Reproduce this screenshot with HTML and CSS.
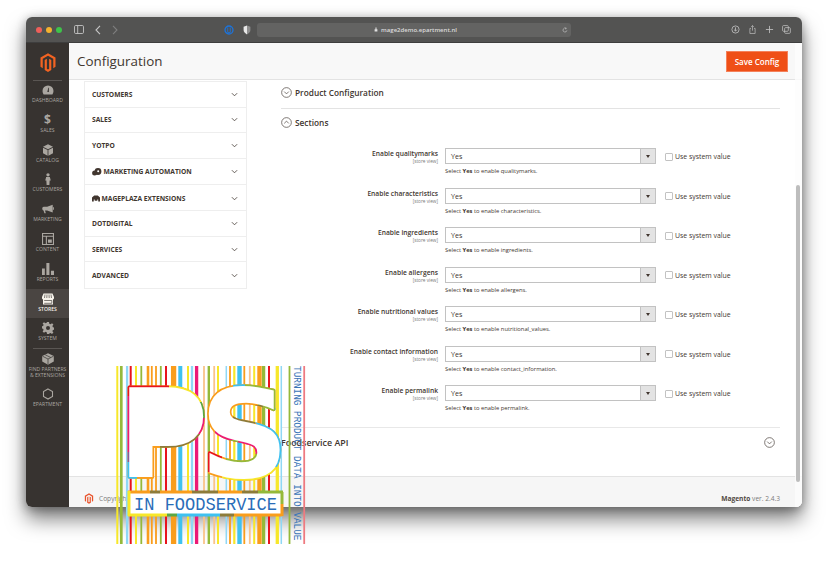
FILE: index.html
```html
<!DOCTYPE html>
<html lang="en">
<head>
<meta charset="utf-8">
<title>Configuration</title>
<link rel="stylesheet" href="styles.css">
</head>
<body>
<div class="stage">
  <div class="window">
    <header class="titlebar">
      <div class="lights"><i class="light red"></i><i class="light amber"></i><i class="light green"></i></div>
      <svg class="tb-icon sidebar-toggle" viewBox="0 0 10 9"><rect x=".5" y=".5" width="9" height="8" rx="1.2"/><path d="M3.7.5v8"/></svg>
      <svg class="tb-icon back" viewBox="0 0 6 10"><path d="M5 .8 1 5l4 4.2"/></svg>
      <svg class="tb-icon forward" viewBox="0 0 6 10"><path d="M1 .8 5 5 1 9.2"/></svg>
      <svg class="ext-blue" viewBox="0 0 10 10"><circle cx="5" cy="5" r="4"/><path class="ext-in" d="M3.700 2.500v5M6.300 2.500v5M3.700 7.500h2.600"/></svg>
      <svg class="ext-shield" viewBox="0 0 8 10"><path class="sh-a" d="M4 .6 7.4 1.8V5c0 2-1.5 3.500-3.400 4.400Z"/><path class="sh-b" d="M4 .6.6 1.800V5c0 2 1.500 3.500 3.400 4.400Z"/></svg>
      <div class="urlbar">
        <span class="url-center"><svg class="lock" viewBox="0 0 6 7"><path d="M1.500 3V2a1.500 1.500 0 0 1 3 0v1h.6v3.600H.9V3Zm.7 0h1.600V2a.8.800 0 0 0-1.600 0Z"/></svg><span class="url">mage2demo.epartment.nl</span></span>
        <svg class="tb-icon reload" viewBox="0 0 8 8"><path d="M6.500 4.500A2.600 2.600 0 1 1 5.500 2M5 .6l.7 1.500-1.500.6"/></svg>
      </div>
      <div class="tb-actions">
        <svg class="tb-icon" viewBox="0 0 10 10"><circle cx="5" cy="5" r="4"/><path d="M5 2.600v4M3.400 5.200 5 6.800l1.600-1.600"/></svg>
        <svg class="tb-icon" viewBox="0 0 10 12"><path d="M3 4.500H1.500v6.800h7V4.500H7M5 7.500V.8M3.200 2.500 5 .8l1.800 1.700"/></svg>
        <svg class="tb-icon" viewBox="0 0 10 10"><path d="M5 1v8M1 5h8"/></svg>
        <svg class="tb-icon" viewBox="0 0 11 11"><rect x=".7" y=".7" width="7" height="7" rx="1.200"/><rect x="3.200" y="3.200" width="7" height="7" rx="1.200"/></svg>
      </div>
    </header>
    <div class="app">
      <nav class="sidebar">
        <div class="side-logo">
          <svg viewBox="0 0 24 25"><path d="M12 0 2 5.800V18.200L5 20V7.600L12 3.500 19 7.600V20L22 18.200V5.800Z"/><path d="M13.500 20.800 12 21.700 10.500 20.800V7.600L7.600 9.300V22.500L12 25 16.400 22.500V9.300L13.500 7.600Z"/></svg>
        </div>
        <a class="side-item"><svg viewBox="0 0 12 10"><path d="M6 .5A5.500 5.500 0 0 0 .5 6c0 1.300.4 2.500 1.100 3.500h8.800c.7-1 1.100-2.200 1.100-3.500A5.500 5.500 0 0 0 6 .5Zm.9 6.500H5.300l1-4.200h.6Z"/></svg><span>Dashboard</span></a>
        <a class="side-item"><span class="dollar">$</span><span>Sales</span></a>
        <a class="side-item"><svg viewBox="0 0 11 12"><path d="M5.500.3 10.500 2.800 5.500 5.200.5 2.800ZM.5 3.800l4.600 2.300v5.600L.5 9.300Zm10 0L5.900 6.100v5.600l4.600-2.400Z"/></svg><span>Catalog</span></a>
        <a class="side-item"><svg viewBox="0 0 7 13"><circle cx="3.500" cy="2" r="1.800"/><path d="M1.500 4.200h4L6.500 8H5.300L5 13H2L1.700 8H.5Z"/></svg><span>Customers</span></a>
        <a class="side-item"><svg viewBox="0 0 14 11"><path d="M12.500.5v9L6 7.200H3.500L4.500 10.500H2.800L1.800 7.200C.8 7 .3 6.200.3 5.200S1 3 2 3h4ZM13 3.500h1v3h-1Z"/></svg><span>Marketing</span></a>
        <a class="side-item"><svg viewBox="0 0 11 11"><path fill-rule="evenodd" d="M0 0h11v11H0Zm1 1v1.500h9V1Zm0 2.500V10h2.500V3.500Zm3.500 0V10H10V3.500ZM5.500 6H9v3H5.500Z"/></svg><span>Content</span></a>
        <a class="side-item"><svg viewBox="0 0 11 11"><path d="M0 5h2.600v6H0Zm4-5h2.800v11H4Zm4.200 7H11v4H8.200Z"/></svg><span>Reports</span></a>
        <a class="side-item active"><svg viewBox="0 0 12 11"><path d="M1.500 0h9L12 3.500v1.200a1.300 1.300 0 0 1-1 1.200V11H1V5.900A1.300 1.300 0 0 1 0 4.700V3.500Z"/><path class="cut" d="M3 1 2.500 4.500M5 1l-.2 3.500M7 1l.2 3.500M9 1l.5 3.500M2.200 7h7.600v2.800H2.200"/></svg><span>Stores</span></a>
        <a class="side-item"><svg viewBox="0 0 12 12"><path fill-rule="evenodd" d="M5 0h2l.3 1.700 1.300.5L10 1.200l1.400 1.400-1 1.400.5 1.300 1.700.3v2l-1.700.3-.5 1.300 1 1.400-1.400 1.400-1.400-1-1.300.5L7 12H5l-.3-1.700-1.300-.5-1.400 1L.6 9.400l1-1.400-.5-1.300L-.6 6.400v-2l1.700-.3.5-1.300-1-1.400L2 .2l1.400 1 1.300-.5ZM6 4a2 2 0 1 0 0 4 2 2 0 0 0 0-4Z"/></svg><span>System</span></a>
        <div class="side-sep"></div>
        <a class="side-item tall"><svg viewBox="0 0 12 12"><path d="M6 .2 11.800 3v5.600L6 11.800.2 8.600V3Z"/><path class="cut" d="M.5 3.200 6 6l5.500-2.800M6 6v5.500M3.200 1.800 8.800 4.500"/></svg><span>Find Partners<br>&amp; Extensions</span></a>
        <a class="side-item"><svg class="hex" viewBox="0 0 11 12"><path d="M5.500.9 10 3.500v5L5.500 11.100 1 8.500v-5Z"/></svg><span>Epartment</span></a>
      </nav>
      <main class="main">
        <div class="pagehead">
          <h1>Configuration</h1>
          <button class="save" type="button">Save Config</button>
        </div>
        <div class="content">
          <aside class="nav">
            <div class="nav-row"><span>Customers</span><svg class="chev" viewBox="0 0 8 5"><path d="M1 1l3 3 3-3"/></svg></div>
            <div class="nav-row"><span>Sales</span><svg class="chev" viewBox="0 0 8 5"><path d="M1 1l3 3 3-3"/></svg></div>
            <div class="nav-row"><span>Yotpo</span><svg class="chev" viewBox="0 0 8 5"><path d="M1 1l3 3 3-3"/></svg></div>
            <div class="nav-row big"><span class="with-icon"><svg viewBox="0 0 10 8"><circle cx="6" cy="3.500" r="3.400"/><circle cx="2.600" cy="5" r="2.500"/><circle class="cutfill" cx="6.200" cy="3.300" r="1"/></svg>Marketing Automation</span><svg class="chev" viewBox="0 0 8 5"><path d="M1 1l3 3 3-3"/></svg></div>
            <div class="nav-row big"><span class="with-icon"><svg class="mp" viewBox="0 0 9 7"><path d="M2.500 0h4L9 2.500V7H7V4.500H6V6H3V4.500H2V7H0V2.500Z"/></svg>Mageplaza Extensions</span><svg class="chev" viewBox="0 0 8 5"><path d="M1 1l3 3 3-3"/></svg></div>
            <div class="nav-row"><span>dotdigital</span><svg class="chev" viewBox="0 0 8 5"><path d="M1 1l3 3 3-3"/></svg></div>
            <div class="nav-row"><span>Services</span><svg class="chev" viewBox="0 0 8 5"><path d="M1 1l3 3 3-3"/></svg></div>
            <div class="nav-row"><span>Advanced</span><svg class="chev" viewBox="0 0 8 5"><path d="M1 1l3 3 3-3"/></svg></div>
          </aside>
          <section class="panel">
            <div class="sec-head first"><svg class="circ" viewBox="0 0 12 12"><circle cx="6" cy="6" r="5.300"/><path d="M3.500 5 6 7.500 8.500 5"/></svg><span>Product Configuration</span></div>
            <div class="sec-head second"><svg class="circ" viewBox="0 0 12 12"><circle cx="6" cy="6" r="5.300"/><path d="M3.500 7 6 4.500 8.500 7"/></svg><span>Sections</span></div>
            <div class="rows">
              <div class="row"><div class="lab"><b>Enable qualitymarks</b><small>[store view]</small></div><div class="field"><div class="select"><span>Yes</span><i class="handle"></i></div><p class="hint">Select <b>Yes</b> to enable qualitymarks.</p></div><label class="sys"><i class="box"></i>Use system value</label></div>
              <div class="row"><div class="lab"><b>Enable characteristics</b><small>[store view]</small></div><div class="field"><div class="select"><span>Yes</span><i class="handle"></i></div><p class="hint">Select <b>Yes</b> to enable characteristics.</p></div><label class="sys"><i class="box"></i>Use system value</label></div>
              <div class="row"><div class="lab"><b>Enable ingredients</b><small>[store view]</small></div><div class="field"><div class="select"><span>Yes</span><i class="handle"></i></div><p class="hint">Select <b>Yes</b> to enable ingredients.</p></div><label class="sys"><i class="box"></i>Use system value</label></div>
              <div class="row"><div class="lab"><b>Enable allergens</b><small>[store view]</small></div><div class="field"><div class="select"><span>Yes</span><i class="handle"></i></div><p class="hint">Select <b>Yes</b> to enable allergens.</p></div><label class="sys"><i class="box"></i>Use system value</label></div>
              <div class="row"><div class="lab"><b>Enable nutritional values</b><small>[store view]</small></div><div class="field"><div class="select"><span>Yes</span><i class="handle"></i></div><p class="hint">Select <b>Yes</b> to enable nutritional_values.</p></div><label class="sys"><i class="box"></i>Use system value</label></div>
              <div class="row"><div class="lab"><b>Enable contact information</b><small>[store view]</small></div><div class="field"><div class="select"><span>Yes</span><i class="handle"></i></div><p class="hint">Select <b>Yes</b> to enable contact_information.</p></div><label class="sys"><i class="box"></i>Use system value</label></div>
              <div class="row"><div class="lab"><b>Enable permalink</b><small>[store view]</small></div><div class="field"><div class="select"><span>Yes</span><i class="handle"></i></div><p class="hint">Select <b>Yes</b> to enable permalink.</p></div><label class="sys"><i class="box"></i>Use system value</label></div>
            </div>
            <div class="sec-head third"><span>Foodservice API</span><svg class="circ" viewBox="0 0 12 12"><circle cx="6" cy="6" r="5.300"/><path d="M3.500 5 6 7.500 8.500 5"/></svg></div>
          </section>
        </div>
        <footer class="footer">
          <span class="copy"><svg viewBox="0 0 24 25"><path d="M12 0 2 5.800V18.200L5 20V7.600L12 3.500 19 7.600V20L22 18.200V5.800Z"/><path d="M13.500 20.800 12 21.700 10.500 20.800V7.600L7.600 9.300V22.500L12 25 16.400 22.500V9.300L13.500 7.600Z"/></svg>Copyright</span>
          <span class="ver"><b>Magento</b> ver. 2.4.3</span>
        </footer>
        <div class="track"><i class="thumb"></i></div>
      </main>
    </div>
  </div>

  <svg class="pslogo" viewBox="116 366 190 184">
    <defs>
      <text id="ltrP" class="psglyph" x="118" y="477">P</text>
      <text id="ltrS" class="psglyph" x="200" y="477">S</text>
      <clipPath id="p1"><rect x="120" y="380" width="49" height="16"/></clipPath>
      <clipPath id="p2"><rect x="169" y="380" width="40" height="22"/></clipPath>
      <clipPath id="p3"><rect x="185" y="402" width="25" height="16"/></clipPath>
      <clipPath id="p4"><rect x="185" y="418" width="25" height="16"/></clipPath>
      <clipPath id="p5"><rect x="160" y="434" width="50" height="20"/></clipPath>
      <clipPath id="p6"><rect x="145" y="434" width="15" height="50"/><rect x="137" y="470" width="12" height="14"/></clipPath>
      <clipPath id="p7"><rect x="120" y="396" width="25" height="56"/></clipPath>
      <clipPath id="p8"><rect x="120" y="452" width="20" height="10"/></clipPath>
      <clipPath id="p9"><rect x="120" y="462" width="17" height="22"/></clipPath>
      <clipPath id="s1"><rect x="233" y="380" width="12" height="15"/></clipPath>
      <clipPath id="s2"><rect x="245" y="380" width="45" height="20"/><rect x="258" y="400" width="24" height="12"/></clipPath>
      <clipPath id="s3"><rect x="275" y="408" width="12" height="8"/></clipPath>
      <clipPath id="s4"><rect x="258" y="412" width="17" height="8"/></clipPath>
      <clipPath id="s5"><rect x="233" y="414" width="22" height="10"/><rect x="255" y="405" width="8" height="10"/></clipPath>
      <clipPath id="s6"><rect x="215" y="426" width="50" height="28"/></clipPath>
      <clipPath id="s7"><polygon points="252,418 290,418 290,467 268,467 268,440"/></clipPath>
      <clipPath id="s8"><polygon points="226,440 238,440 240,455 266,453 266,466 226,466"/></clipPath>
      <clipPath id="s9"><rect x="204" y="446" width="18" height="26"/></clipPath>
      <clipPath id="s10"><rect x="214" y="442" width="14" height="10"/></clipPath>
      <clipPath id="s11"><rect x="222" y="467" width="64" height="15"/></clipPath>
    </defs>
    <path class="st red" stroke-width="2" d="M130.700 366v178M166 366v178M269 366v178"/>
    <path class="st yellow" stroke-width="2" d="M117.300 366v178M136 366v178M188 366v178M218 366v178M254.200 366v178"/>
    <path class="st yellow" stroke-width="2.200" d="M234.300 366v178"/>
    <path class="st yellow" stroke-width="3.300" d="M277.300 366v178"/>
    <path class="st olive" stroke-width="2.700" d="M121.300 366v178"/>
    <path class="st olive" stroke-width="1.800" d="M141.300 366v178M160.800 366v178M289.500 366v178"/>
    <path class="st olive" stroke-width="2.400" d="M208.800 366v178"/>
    <path class="st olive" stroke-width="3.300" d="M263.600 366v178"/>
    <path class="st lblue" stroke-width="2.300" d="M127.100 366v178M192 366v178"/>
    <path class="st lblue" stroke-width="1.500" d="M226.300 366v178M281.300 366v178"/>
    <path class="st orange" stroke-width="2.600" d="M148 366v178"/>
    <path class="st orange" stroke-width="1.800" d="M151.800 366v178M156 366v178M230 366v178M244.300 366v178"/>
    <path class="st orange" stroke-width="5.300" d="M173.600 366v178"/>
    <path class="st orange" stroke-width="4.400" d="M259.500 366v178"/>
    <path class="st cyan" stroke-width="4" d="M180.300 366v178"/>
    <path class="st cyan" stroke-width="4.400" d="M239.500 366v178"/>
    <path class="st magenta" stroke-width="3.300" d="M196.600 366v178"/>
    <path class="st porange" stroke-width="1.800" d="M204 366v178M214.200 366v178M249.800 366v178"/>
    <path class="st pink" stroke-width="1.800" d="M304.200 366v178"/>

    <use href="#ltrP" class="out c-orange"/>
    <use href="#ltrS" class="out c-orange"/>
    <use href="#ltrP" class="out c-red" clip-path="url(#p1)"/>
    <use href="#ltrP" class="out c-yellow" clip-path="url(#p2)"/>
    <use href="#ltrP" class="out c-green" clip-path="url(#p3)"/>
    <use href="#ltrP" class="out c-magenta" clip-path="url(#p4)"/>
    <use href="#ltrP" class="out c-brown" clip-path="url(#p5)"/>
    <use href="#ltrP" class="out c-orange" clip-path="url(#p6)"/>
    <use href="#ltrP" class="out c-magenta" clip-path="url(#p7)"/>
    <use href="#ltrP" class="out c-purple" clip-path="url(#p8)"/>
    <use href="#ltrP" class="out c-cyan" clip-path="url(#p9)"/>
    <use href="#ltrS" class="out c-cyan" clip-path="url(#s1)"/>
    <use href="#ltrS" class="out c-olive" clip-path="url(#s2)"/>
    <use href="#ltrS" class="out c-cyan" clip-path="url(#s3)"/>
    <use href="#ltrS" class="out c-green" clip-path="url(#s4)"/>
    <use href="#ltrS" class="out c-brown" clip-path="url(#s5)"/>
    <use href="#ltrS" class="out c-magenta" clip-path="url(#s6)"/>
    <use href="#ltrS" class="out c-cyan" clip-path="url(#s7)"/>
    <use href="#ltrS" class="out c-olive" clip-path="url(#s8)"/>
    <use href="#ltrS" class="out c-red" clip-path="url(#s9)"/>
    <use href="#ltrS" class="out c-brown" clip-path="url(#s10)"/>
    <use href="#ltrS" class="out c-yellow" clip-path="url(#s11)"/>
    <use href="#ltrP" class="fillw"/>
    <use href="#ltrS" class="fillw"/>
    <rect class="wh" x="149" y="402" width="33" height="32"/>

    <rect class="wh" x="130" y="493" width="151" height="21"/>
    <path class="bd c-orange" d="M128 492h22M160 492h32M218 492h24M282 515H234"/>
    <path class="bd c-brown" d="M150 492h10M192 492h26M242 492h16M220 515h14"/>
    <path class="bd c-olive" d="M258 492h25M282 492v12"/>
    <path class="bd c-orange" d="M282 504v12"/>
    <path class="bd c-yellow" d="M129 491v25M128 515h39"/>
    <path class="bd c-green" d="M167 515h10"/>
    <path class="bd c-cyan" d="M177 515h43"/>
    <text class="infood" x="134" y="510" textLength="143" lengthAdjust="spacingAndGlyphs">IN FOODSERVICE</text>
  </svg>
  <span class="turning">TURNING PRODUCT DATA INTO VALUE</span>
</div>
</body>
</html>
```

FILE: styles.css
```css
* { box-sizing: border-box; }
html, body { margin: 0; padding: 0; background: #fff; }
body { font-family: "Open Sans", "Liberation Sans", sans-serif; color: #41362f; }
.stage { position: relative; width: 829px; height: 563px; overflow: hidden; padding: 17px 27px 0 26px; }
.window { width: 776px; height: 490px; border-radius: 6px; overflow: hidden; display: flex; flex-direction: column; box-shadow: 0 12px 20px rgba(0,0,0,.5), 0 2px 10px rgba(0,0,0,.25), 0 0 14px rgba(0,0,0,.08); }

.titlebar { height: 26px; flex: none; display: flex; align-items: center; padding-left: 10px; background: #535352; border-bottom: 1px solid #3e3e3e; }
.lights { display: flex; gap: 4px; width: 38px; }
.light { width: 6px; height: 6px; border-radius: 50%; }
.light.red { background: #ee5f5a; }
.light.amber { background: #f5b12e; }
.light.green { background: #3ec34a; }
.tb-icon { fill: none; stroke: #c4c4c4; stroke-width: .9; flex: none; }
.sidebar-toggle { width: 10px; height: 9px; margin-right: 11px; }
.back { width: 6px; height: 10px; margin-right: 11px; stroke-width: 1.1; }
.forward { width: 6px; height: 10px; margin-right: 106px; stroke: #7e7e7e; stroke-width: 1.1; }
.ext-blue { width: 10px; height: 10px; flex: none; margin-right: 9px; fill: none; stroke: #1c74dc; stroke-width: 1.3; }
.ext-in { stroke-width: .8; }
.ext-shield { width: 8px; height: 10px; flex: none; margin-right: 6px; }
.sh-a { fill: #8d8d8d; }
.sh-b { fill: #e8e8e8; }
.urlbar { width: 314px; height: 14px; flex: none; position: relative; display: flex; align-items: center; justify-content: center; border-radius: 3px; background: #636362; }
.url-center { display: flex; align-items: center; gap: 3px; margin-left: 3px; }
.lock { width: 4px; height: 5px; fill: #e0e0e0; }
.url { font-size: 6px; font-weight: 600; color: #dcdcdc; line-height: 1; }
.reload { position: absolute; right: 3px; top: 4px; width: 6px; height: 6px; }
.tb-actions { display: flex; align-items: center; gap: 8px; margin-left: 160px; }
.tb-actions svg { width: 9px; height: 9px; }

.app { flex: 1; min-height: 0; display: flex; }
.sidebar { width: 43px; flex: none; background: #373330; display: flex; flex-direction: column; color: #aaa6a0; }
.side-logo { height: 37px; flex: none; display: flex; align-items: center; justify-content: center; }
.side-logo svg { width: 18px; height: 21px; fill: #f26322; margin-top: 1px; }
.side-item { height: 29.8px; flex: none; display: flex; flex-direction: column; align-items: center; padding-top: 4px; position: relative; }
.side-item svg { height: 12px; width: 12px; fill: #aaa6a0; flex: none; }
.side-item .cut { fill: none; stroke: #373330; stroke-width: .7; }
.side-item span { font-size: 5.1px; line-height: 6px; text-transform: uppercase; text-align: center; margin-top: 1px; white-space: nowrap; }
.side-item span.dollar { font-size: 12px; line-height: 12px; font-weight: 700; margin: 0; text-transform: none; }
.side-item span.dollar + span { margin-top: 1px; }
.side-item.active { background: #4a4542; color: #f7f3eb; font-weight: 600; }
.side-item.active svg { fill: #f7f3eb; }
.side-item.active .cut { stroke: #4a4542; }
.side-item.tall { height: 35px; padding-top: 4px; }
.side-item.tall span { margin-top: .5px; }
.side-item .hex { fill: none; stroke: #aaa6a0; stroke-width: 1.1; }
.side-sep { height: 1px; margin: 0 7px; background: #5a5653; flex: none; }
.side-logo + .side-item::before { content: ""; position: absolute; top: 0; left: 7px; right: 7px; height: 1px; background: #5a5653; }

.main { flex: 1; min-width: 0; display: flex; flex-direction: column; position: relative; background: #fff; }
.pagehead { height: 37px; flex: none; display: flex; align-items: center; justify-content: space-between; padding: 0 14px 0 8px; background: #f8f8f8; border-bottom: 1px solid #e3e3e3; }
h1 { margin: 0; font-size: 13.4px; font-weight: 400; color: #41362f; }
.save { width: 62px; height: 21px; padding: 0; border: 1px solid #f4815a; background: #ef4f16; color: #fff; font: 600 8px "Open Sans", sans-serif; }

.content { flex: 1; min-height: 0; display: flex; overflow: hidden; }
.nav { width: 163px; flex: none; margin-left: 15px; align-self: flex-start; border: 1px solid #eee; margin-top: 1px; }
.nav-row { height: 25.5px; display: flex; align-items: center; justify-content: space-between; padding: 0 8px 0 7px; border-bottom: 1px solid #eee; font-size: 6.7px; font-weight: 700; text-transform: uppercase; color: #41362f; }
.nav-row:last-child { border-bottom: 0; }
.nav-row.big { height: 26.4px; padding-top: 1px; }
.with-icon { display: flex; align-items: center; gap: 1.5px; }
.with-icon svg { width: 10px; height: 8px; fill: #41362f; }
.with-icon svg.mp { width: 8px; height: 7px; }
.cutfill { fill: #fff; }
.chev { width: 7px; height: 5px; fill: none; stroke: #514943; stroke-width: 1; }

.panel { width: 499px; flex: none; margin-left: 34px; }
.sec-head { display: flex; align-items: center; gap: 3px; font-size: 8.3px; font-weight: 600; color: #41362f; }
.circ { width: 11px; height: 11px; fill: none; stroke: #514943; stroke-width: .8; }
.sec-head.first { height: 29px; padding-bottom: 3px; border-bottom: 1px solid #e3e3e3; }
.sec-head.second { height: 30px; padding-bottom: 3px; }
.rows { padding-top: 9px; border-bottom: 1px solid #e8e8e8; height: 289px; }
.row { height: 39.5px; display: grid; grid-template-columns: 157px 211px auto; column-gap: 7px; }
.lab { display: flex; flex-direction: column; align-items: flex-end; padding-top: 2px; }
.lab b { font-size: 6.7px; line-height: 8px; font-weight: 600; color: #41362f; white-space: nowrap; }
.lab small { font-size: 4.7px; line-height: 6px; color: #7a7a7a; }
.select { height: 16px; display: flex; align-items: center; justify-content: space-between; border: 1px solid #c2c2c2; padding-left: 5px; font-size: 7.1px; color: #41362f; }
.handle { width: 16px; height: 16px; margin-right: -1px; background: #e3e3e3; border: 1px solid #c2c2c2; position: relative; }
.handle::after { content: ""; position: absolute; left: 5px; top: 6px; border: 2px solid transparent; border-top: 3px solid #41362f; border-bottom: 0; }
.hint { margin: 4px 0 0; font-size: 5.8px; line-height: 7px; color: #41362f; white-space: nowrap; }
.hint b { font-weight: 700; }
.sys { display: flex; align-items: center; gap: 2px; height: 17px; margin-left: 2px; font-size: 6.9px; color: #41362f; white-space: nowrap; }
.box { width: 8px; height: 8px; border: 1px solid #c2c2c2; border-radius: 1px; background: #fff; }
.sec-head.third { height: 28px; justify-content: space-between; padding-right: 5px; font-size: 8.9px; }

.footer { height: 31px; flex: none; display: flex; align-items: center; justify-content: space-between; padding: 12px 22px 0 15px; background: #f6f6f6; border-top: 1px solid #e3e3e3; font-size: 6.6px; color: #7a7a7a; }
.copy { display: flex; align-items: center; gap: 5px; }
.copy svg { width: 10px; height: 11px; fill: #e8522a; }
.ver b { font-weight: 700; color: #514943; }
.track { position: absolute; top: 0; right: 0; bottom: 0; width: 7px; background: rgba(252,252,252,.8); }
.thumb { position: absolute; top: 142px; bottom: 25px; left: 1px; width: 4px; border-radius: 2px; background: #bdbdbd; }

.pslogo { position: absolute; left: 116px; top: 366px; width: 190px; height: 184px; }
.st { fill: none; }
.st.red { stroke: #e8141d; }
.st.yellow { stroke: #f7e72a; }
.st.olive { stroke: #95b93a; }
.st.lblue { stroke: #8fd8f5; }
.st.orange { stroke: #f99d1c; }
.st.cyan { stroke: #3fc1f0; }
.st.magenta { stroke: #ec1a76; }
.st.porange { stroke: #f9c48a; }
.st.pink { stroke: #ee7a80; }
.psglyph { font: 700 123px "DejaVu Sans", sans-serif; }
.out { fill: none; stroke-width: 3.4; stroke-linejoin: round; }
.fillw { fill: #fff; }
.wh { fill: #fff; }
.c-red { stroke: #e8141d; }
.c-yellow { stroke: #f7e72a; }
.c-olive { stroke: #95b93a; }
.c-green { stroke: #5aa845; }
.c-orange { stroke: #f99d1c; }
.c-cyan { stroke: #3fc1f0; }
.c-magenta { stroke: #ec1a76; }
.c-brown { stroke: #8d7b3a; }
.c-purple { stroke: #8a5a9a; }
.bd { fill: none; stroke-width: 3; }
.infood { font: 400 19px "Liberation Mono", monospace; fill: #2a6db8; }
.turning { position: absolute; left: 292px; top: 366px; writing-mode: vertical-rl; font: 400 9.4px/9px "Liberation Mono", monospace; color: #3a75b8; white-space: nowrap; transform: scaleX(1.2); transform-origin: left top; }
```
